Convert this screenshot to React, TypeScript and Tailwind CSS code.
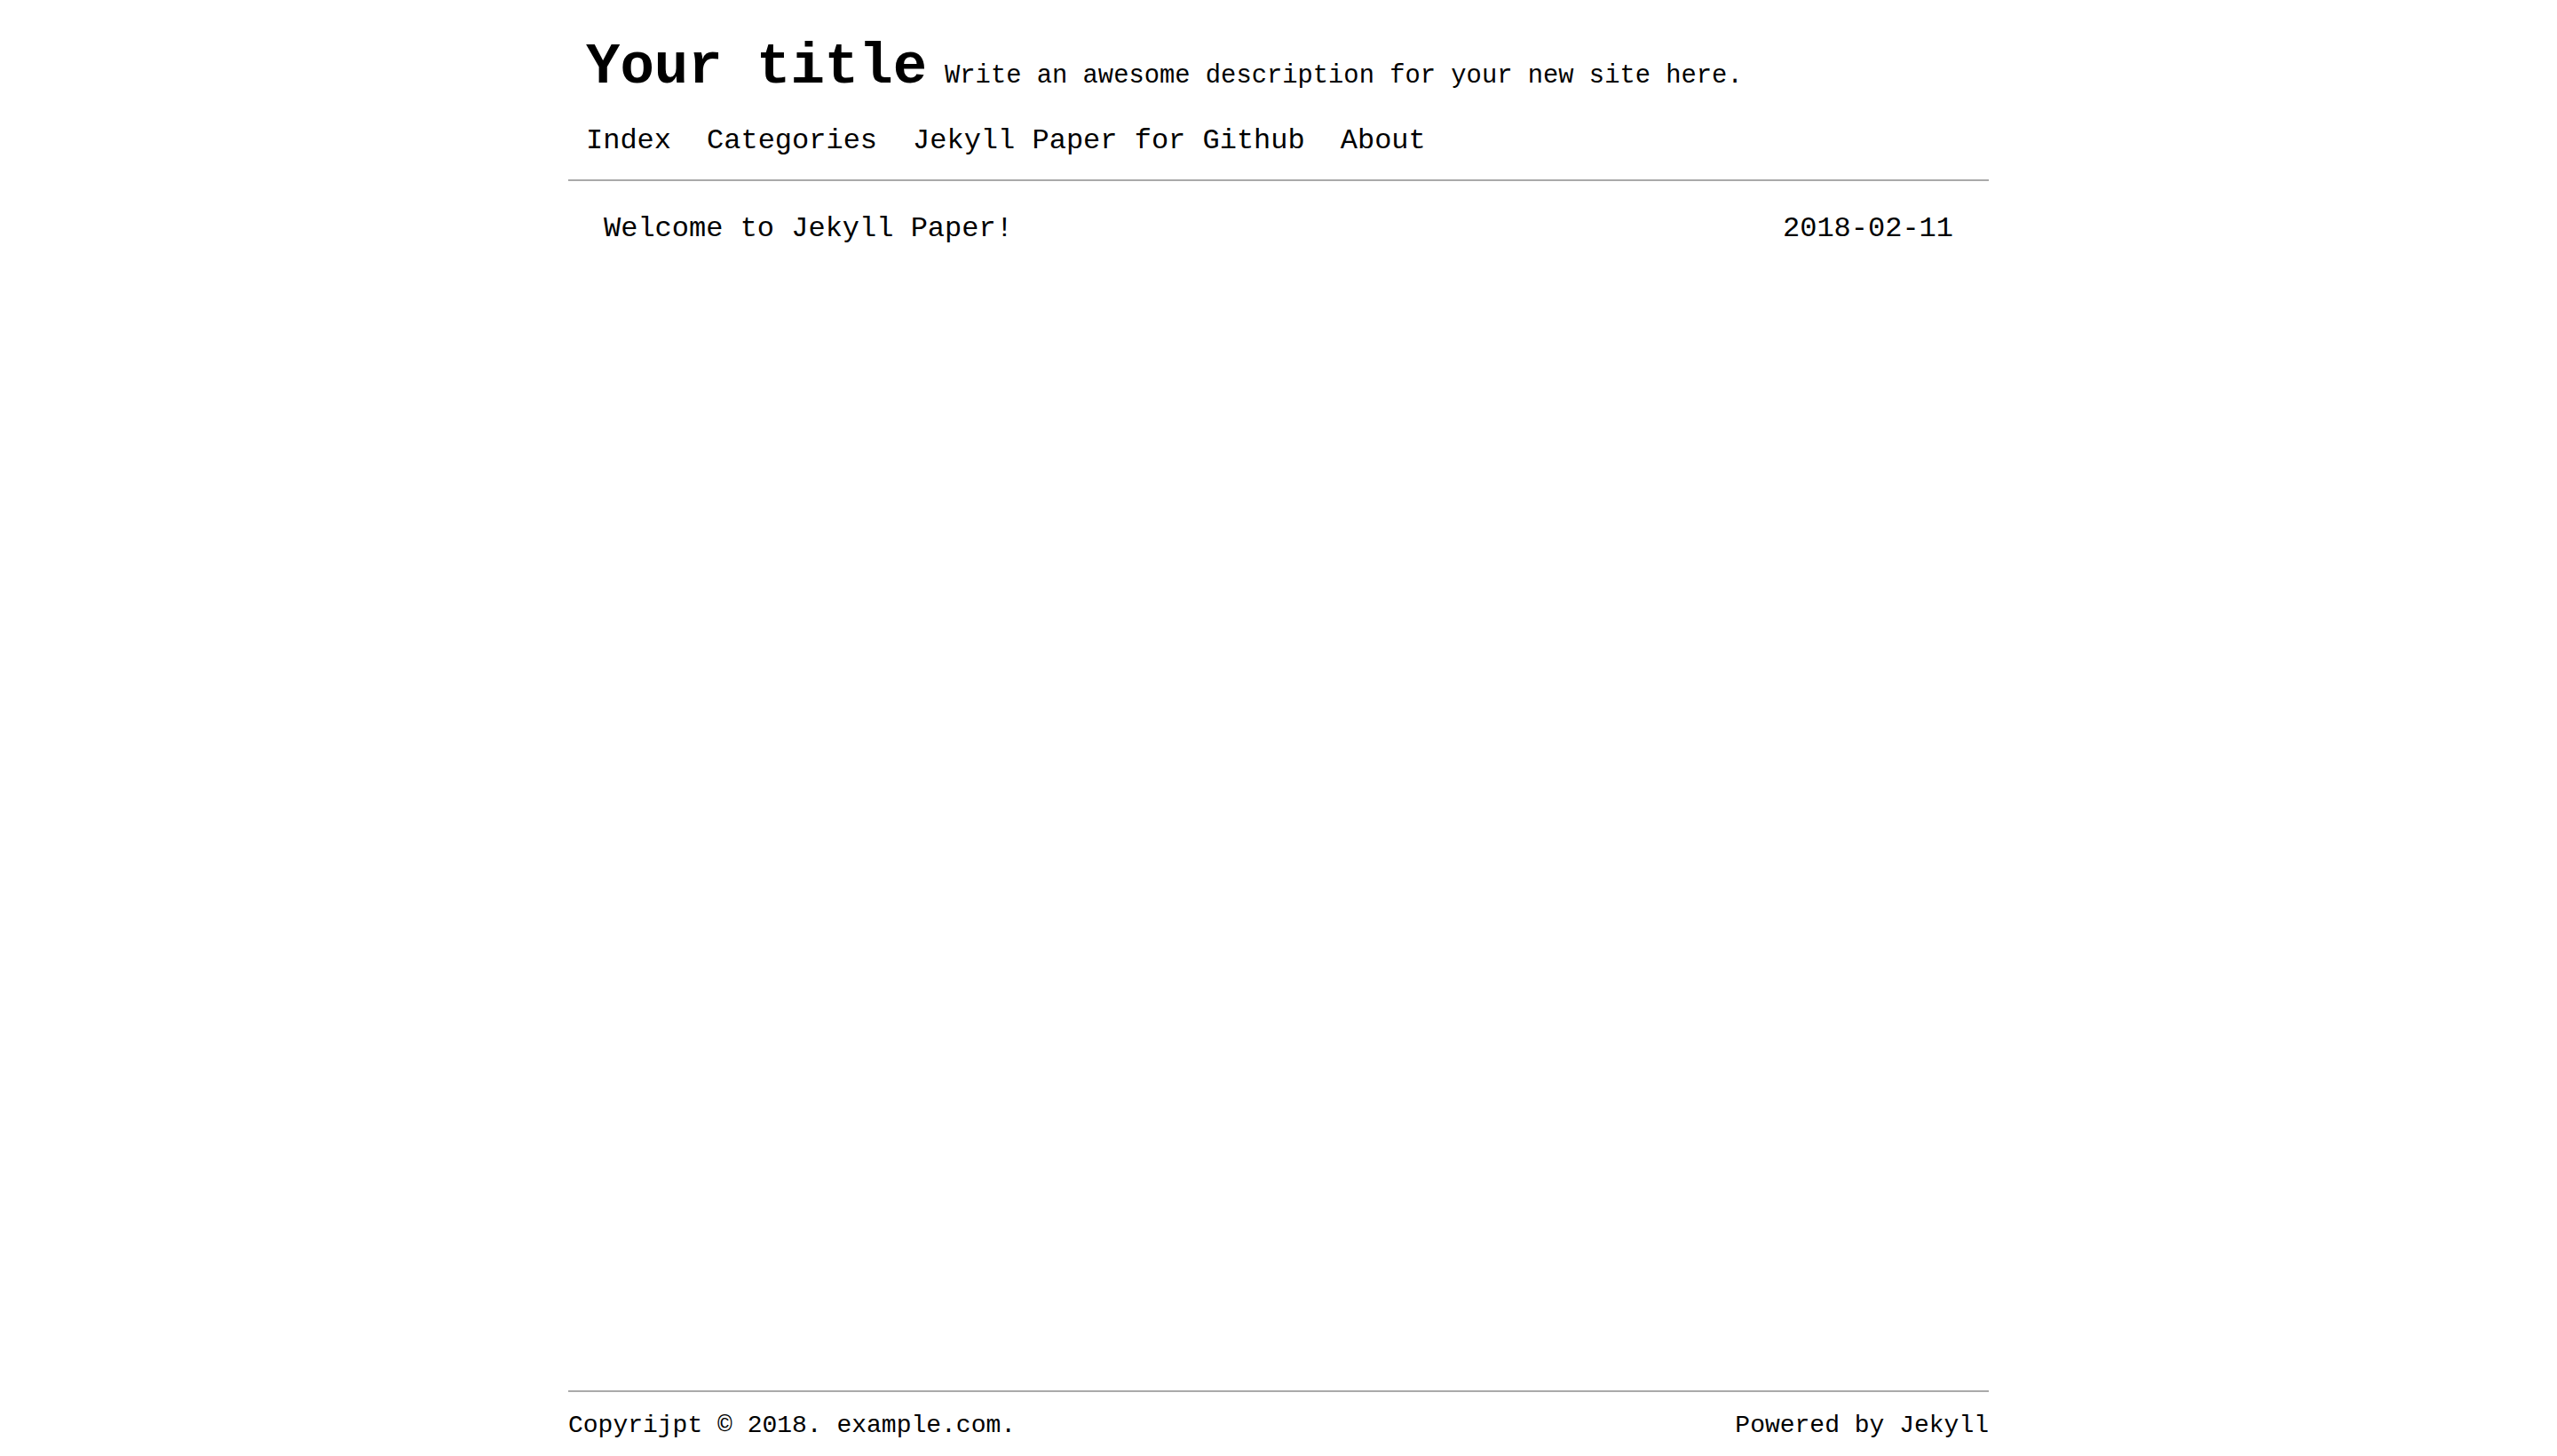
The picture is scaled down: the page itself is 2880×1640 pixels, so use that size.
const links = ['Index', 'Categories', 'Jekyll Paper for Github', 'About']

const posts = [{ title: 'Welcome to Jekyll Paper!', date: '2018-02-11' }]

export default function App() {
  return (
    <div className="min-h-screen bg-white text-black font-['Liberation_Mono',monospace]">
      <div className="mx-auto flex min-h-screen w-[1600px] flex-col">
        <header className="border-b-2 border-[#aaaaaa] px-[20px] pt-[44px] pb-[27px]">
          <div className="flex items-baseline">
            <a href="#" className="text-[64px] font-bold leading-none">
              Your title
            </a>
            <span className="ml-[20px] text-[28.8px] leading-none">
              Write an awesome description for your new site here.
            </span>
          </div>
          <nav className="mt-[35px] flex gap-[40px] text-[32px] leading-none">
            {links.map((link) => (
              <a key={link} href="#">
                {link}
              </a>
            ))}
          </nav>
        </header>

        <main className="pt-[38px]">
          {posts.map((post) => (
            <div
              key={post.title}
              className="flex justify-between px-[40px] text-[32px] leading-none"
            >
              <a href="#">{post.title}</a>
              <span>{post.date}</span>
            </div>
          ))}
        </main>

        <footer className="mt-auto flex justify-between border-t-2 border-[#aaaaaa] pt-[24px] pb-[20px] text-[28px] leading-none">
          <span>Copyrijpt © 2018. example.com.</span>
          <span>Powered by Jekyll</span>
        </footer>
      </div>
    </div>
  )
}
